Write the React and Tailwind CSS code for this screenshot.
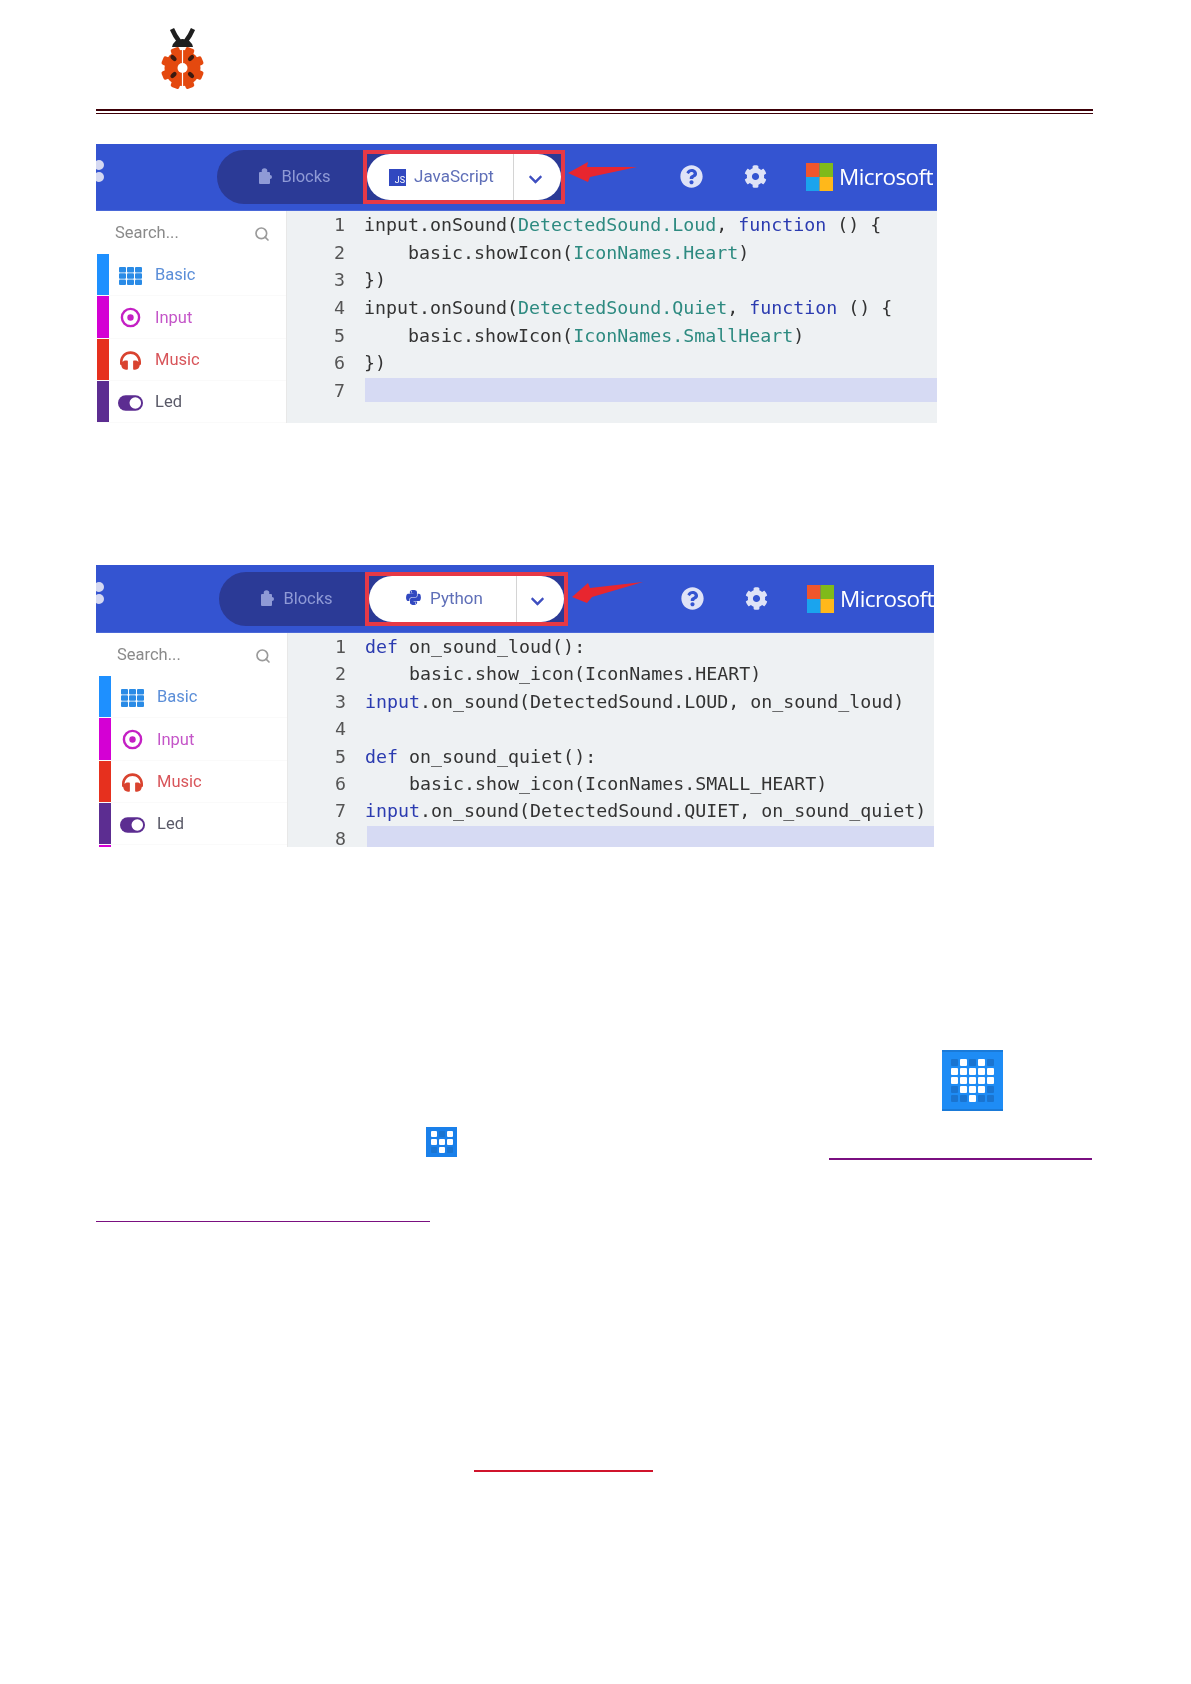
import React from "react";
import { FaChevronDown, FaCog, FaHeadphones, FaPython, FaQuestionCircle } from "react-icons/fa";
import { Search } from "lucide-react";

const teal = "text-[#2d8a80]";
const blue = "text-[#2b3bb0]";

const jsLines = [
  [["input.onSound("], ["DetectedSound.Loud", teal], [", "], ["function", blue], [" () {"]],
  [["    basic.showIcon("], ["IconNames.Heart", teal], [")"]],
  [["})"]],
  [["input.onSound("], ["DetectedSound.Quiet", teal], [", "], ["function", blue], [" () {"]],
  [["    basic.showIcon("], ["IconNames.SmallHeart", teal], [")"]],
  [["})"]],
  [],
];

const pyLines = [
  [["def", blue], [" on_sound_loud():"]],
  [["    basic.show_icon(IconNames.HEART)"]],
  [["input", blue], [".on_sound(DetectedSound.LOUD, on_sound_loud)"]],
  [],
  [["def", blue], [" on_sound_quiet():"]],
  [["    basic.show_icon(IconNames.SMALL_HEART)"]],
  [["input", blue], [".on_sound(DetectedSound.QUIET, on_sound_quiet)"]],
  [],
];

function GridIcon() {
  return (
    <svg width="23" height="18" viewBox="0 0 23 18" fill="#2a8be6">
      {[0, 6.3, 12.6].map((y) =>
        [0, 8, 16].map((x) => <rect key={x + "-" + y} x={x} y={y} width="7" height="5.4" rx="1" />)
      )}
    </svg>
  );
}

function InputIcon() {
  return (
    <svg width="21" height="21" viewBox="0 0 21 21" fill="none">
      <circle cx="10.5" cy="10.5" r="8.6" stroke="#c41fc4" strokeWidth="2.4" />
      <circle cx="10.5" cy="10.5" r="3.2" fill="#c41fc4" />
    </svg>
  );
}

function LedIcon() {
  return (
    <svg width="26" height="16" viewBox="0 0 26 16">
      <rect width="26" height="16" rx="8" fill="#5c2d91" />
      <circle cx="18" cy="8" r="6" fill="#fff" />
    </svg>
  );
}

function BlockIcon() {
  return (
    <svg width="13" height="16" viewBox="0 0 13 16" fill="#8f9ad6" className="-mt-[2px]">
      <rect x="0" y="4" width="11" height="12" rx="1" />
      <circle cx="5.5" cy="3" r="2.8" />
      <circle cx="11" cy="9" r="2" />
    </svg>
  );
}

function HeartImage({ big }) {
  const cells = big
    ? [0, 1, 0, 1, 0, 1, 1, 1, 1, 1, 1, 1, 1, 1, 1, 0, 1, 1, 1, 0, 0, 0, 1, 0, 0]
    : [1, 0, 1, 1, 1, 1, 0, 1, 0];
  return (
    <div
      className={
        big
          ? "w-[61px] h-[61px] shrink-0 bg-[#1e8cf5] border-y-2 border-[#1a7ad8] flex items-center justify-center"
          : "w-[31px] h-[30px] shrink-0 bg-[#1a80ea] flex items-center justify-center"
      }
    >
      <div className={big ? "grid grid-cols-5 gap-[2.4px] blur-[0.6px]" : "grid grid-cols-3 gap-[2px] blur-[0.6px]"}>
        {cells.map((on, i) => (
          <div
            key={i}
            className={
              (big ? "w-[6.5px] h-[6.5px] rounded-[1px] " : "w-[6px] h-[6px] rounded-[1px] ") +
              (on ? "bg-white" : "bg-[#1a74d0]")
            }
          />
        ))}
      </div>
    </div>
  );
}

function Logo() {
  return (
    <svg width="80" height="75" viewBox="0 0 80 75" className="ml-[44px] block">
      <path d="M32 9 Q35 16 39 21 M53 9 Q50 16 46 21" stroke="#1f1f1f" strokeWidth="4.5" fill="none" />
      <path d="M32 27 Q34 19 42.5 19 Q51 19 53 27 Z" fill="#1f1f1f" />
      {[22.5, 67.5, 112.5, 157.5].map((r) => (
        <rect key={r} x="21" y="43.5" width="43" height="9" rx="2" fill="#e4490f" transform={`rotate(${r} 42.5 48)`} />
      ))}
      <circle cx="42.5" cy="48" r="18" fill="#e4490f" />
      <path d="M42.5 27 V69" stroke="#fff" strokeWidth="1.2" />
      <circle cx="42.5" cy="48" r="5" fill="#fff" />
      {[
        [33.5, 38, 45],
        [51, 38, -45],
        [33.5, 55, -45],
        [51, 55, 45],
      ].map(([x, y, r]) => (
        <ellipse key={x + "-" + y} cx={x} cy={y} rx="3.6" ry="2.2" fill="#3a1a10" transform={`rotate(${r} ${x} ${y})`} />
      ))}
    </svg>
  );
}

function EditorCard({ ui, label, labelIcon, lines, arrow }) {
  const categories = [
    { name: "Basic", bar: "bg-[#1e90ff]", text: "text-[#5b8ed8]", icon: <GridIcon /> },
    { name: "Input", bar: "bg-[#d400d4]", text: "text-[#c455c8]", icon: <InputIcon /> },
    { name: "Music", bar: "bg-[#e6301e]", text: "text-[#d8555a]", icon: <FaHeadphones className="text-[21px] text-[#d9432f]" /> },
    { name: "Led", bar: "bg-[#5c2d91]", text: "text-[#5a5a68]", icon: <LedIcon /> },
    { name: "", bar: "bg-[#d400d4]", text: "", icon: null },
  ];

  return (
    <div className={ui.card}>
      <div className={ui.header}>
        <svg width="9" height="24" viewBox="0 0 9 24" className="mt-[9px] shrink-0" fill="#d5d9f2">
          <circle cx="3" cy="6" r="5" />
          <circle cx="3" cy="18" r="5" />
        </svg>
        <div className={ui.blocks}>
          <BlockIcon />
          <span className="text-[16.5px] text-[#8f9ad6]">Blocks</span>
        </div>
        <div className={ui.redBox}>
          <div className="flex h-full w-full bg-white rounded-full overflow-hidden">
            <div className="flex-1 flex items-center justify-center gap-[8px] pl-[3px] border-r border-[#d4d4d4]">
              {labelIcon}
              <span className="text-[17px] text-[#5f6fb8]">{label}</span>
            </div>
            <div className={ui.chevron}>
              <FaChevronDown className="text-[15px] text-[#3f4fc0] mt-[4px]" />
            </div>
          </div>
        </div>
        <FaQuestionCircle className={ui.question} />
        <FaCog className={ui.gear} />
        <svg width="27" height="28" viewBox="0 0 27 28" className={ui.ms}>
          <rect width="13.5" height="14" fill="#f0562c" />
          <rect x="13.5" width="13.5" height="14" fill="#7fba1a" />
          <rect y="14" width="13.5" height="14" fill="#1aa4ee" />
          <rect x="13.5" y="14" width="13.5" height="14" fill="#ffb81a" />
        </svg>
        <span className={ui.microsoft}>Microsoft</span>
        {arrow}
      </div>

      <div className={ui.body}>
        <div className={ui.sidebar}>
          <div className="h-[43px] shrink-0 flex items-center justify-between pl-[18px] pr-[16px] pt-[2px]">
            <span className="text-[16.5px] text-[#8a8a8a]">Search...</span>
            <Search size={16} strokeWidth={2.5} className="text-[#9a9a9a]" />
          </div>
          {categories.map((c) => (
            <div key={c.bar + c.name} className="h-[42.3px] shrink-0 flex items-stretch border-b border-[#fafafa]">
              <div className={"w-[12px] shrink-0 " + c.bar} />
              <div className="w-[34px] shrink-0 flex items-center justify-center pl-[9px] pt-[2px]">{c.icon}</div>
              <span className={"ml-[12px] mt-[2px] self-center text-[16.5px] " + c.text}>{c.name}</span>
            </div>
          ))}
        </div>
        <div className={ui.code}>
          {lines.map((tokens, i) => (
            <div key={i} className={ui.row}>
              <span className={ui.num}>{i + 1}</span>
              {tokens.length > 0 ? (
                <span className="whitespace-pre">
                  {tokens.map(([text, color], j) => (
                    <span key={j} className={color}>
                      {text}
                    </span>
                  ))}
                </span>
              ) : (
                i === lines.length - 1 && <div className={ui.highlight} />
              )}
            </div>
          ))}
        </div>
      </div>
    </div>
  );
}

const jsUi = {
  card: "w-[841px] h-[279px] mt-[30px] overflow-hidden bg-white font-[Roboto,sans-serif] blur-[0.35px]",
  header: "relative h-[67px] flex items-start pt-[6px] bg-[#3454d1] border-b border-[#4a68d8]",
  blocks: "ml-[112px] w-[146px] h-[54px] shrink-0 rounded-l-full bg-[#2b3a96] flex items-center justify-center gap-[9px] pl-[10px]",
  redBox: "w-[202px] h-[54px] shrink-0 border-4 border-[#e63946] bg-[#2b3a96]",
  chevron: "w-[47px] flex items-center justify-center pr-[4px]",
  question: "ml-[115px] mt-[15px] text-[23px] text-[#dfe3f7] shrink-0",
  gear: "ml-[41px] mt-[15px] text-[23px] text-[#dfe3f7] shrink-0",
  ms: "ml-[39px] mt-[13px] shrink-0",
  microsoft: "ml-[6px] mt-[11px] text-[22.5px] leading-[32px] tracking-[-0.6px] text-white font-['Open_Sans',sans-serif] shrink-0",
  body: "flex h-[212px]",
  sidebar: "w-[190px] ml-px shrink-0 bg-white border-r border-[#e8e8e8] overflow-hidden flex flex-col",
  code: "flex-1 bg-[#eef1f3] font-['DejaVu_Sans_Mono',monospace] text-[18.3px] text-[#333]",
  row: "h-[27.7px] leading-[27.7px] flex",
  num: "w-[58px] mr-[19px] text-right text-[#555] shrink-0",
  highlight: "flex-1 h-[24px] mt-[1px] ml-px bg-[#d6daf3]",
};

const pyUi = {
  ...jsUi,
  card: "w-[838px] h-[282px] mt-[142px] overflow-hidden bg-white font-[Roboto,sans-serif] blur-[0.35px]",
  header: "relative h-[68px] flex items-start pt-[7px] bg-[#3454d1] border-b border-[#4a68d8]",
  blocks: "ml-[114px] w-[146px] h-[54px] shrink-0 rounded-l-full bg-[#2b3a96] flex items-center justify-center gap-[9px] pl-[10px]",
  redBox: "w-[203px] h-[54px] shrink-0 border-4 border-[#e63946] bg-[#2b3a96]",
  chevron: "w-[47px] flex items-center justify-center pr-[7px]",
  question: "ml-[113px] mt-[15px] text-[23px] text-[#dfe3f7] shrink-0",
  gear: "ml-[41px] mt-[15px] text-[23px] text-[#dfe3f7] shrink-0",
  ms: "ml-[39px] mt-[13px] shrink-0",
  body: "flex h-[214px]",
  sidebar: "w-[189px] ml-[3px] shrink-0 bg-white border-r border-[#e8e8e8] overflow-hidden flex flex-col",
  row: "h-[27.4px] leading-[27.4px] flex",
  highlight: "flex-1 h-[24px] mt-[1px] ml-[2px] bg-[#d6daf3]",
};

export default function App() {
  return (
    <div className="w-[1191px] h-[1684px] bg-white pl-[96px] pt-[20px] overflow-hidden">
      <Logo />
      <div className="w-[997px] h-[5px] mt-[14px] border-t-2 border-b border-[#3d0008]" />

      <EditorCard
        ui={jsUi}
        label="JavaScript"
        labelIcon={
          <span className="w-[17px] h-[17px] bg-[#3148c0] text-white text-[9px] leading-none flex items-end justify-end pr-[1px] pb-[1px]">
            JS
          </span>
        }
        lines={jsLines}
        arrow={
          <svg width="76" height="26" viewBox="0 0 76 26" className="absolute left-[468px] top-[16px]" fill="#e8262f">
            <polygon points="4,13 24,2 23,7 73,7 26,17 24,22" />
          </svg>
        }
      />

      <EditorCard
        ui={pyUi}
        label="Python"
        labelIcon={<FaPython className="text-[17px] text-[#3148c0] -mt-[3px]" />}
        lines={pyLines}
        arrow={
          <svg width="76" height="26" viewBox="0 0 76 26" className="absolute left-[472px] top-[15px]" fill="#e8262f">
            <polygon points="4,17 20,3 22,8 75,2 24,17 19,23" />
          </svg>
        }
      />

      <div className="w-[997px] mt-[203px] flex justify-end pr-[90px]">
        <HeartImage big />
      </div>

      <div className="w-[996px] mt-[16px] flex items-start">
        <div className="ml-[330px]">
          <HeartImage />
        </div>
        <div className="ml-auto mt-[31px] w-[263px] h-[2px] bg-[#7a0f80]" />
      </div>

      <div className="w-[334px] h-px mt-[61px] bg-[#7a0f80]" />
      <div className="w-[179px] h-[2px] ml-[378px] mt-[248px] bg-[#d0142c]" />
    </div>
  );
}
